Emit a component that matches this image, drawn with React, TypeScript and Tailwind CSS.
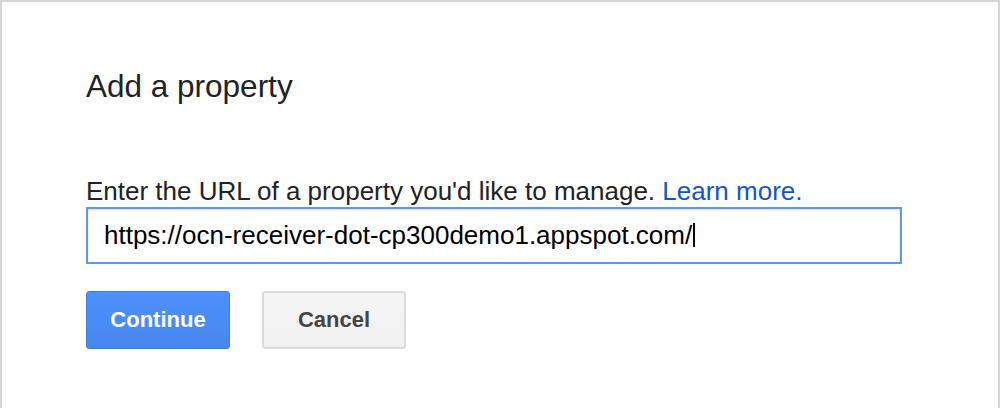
import React from "react";

export default function App() {
  return (
    <div
      className="h-[408px] w-[1000px] bg-white border-t-2 border-l-2 border-r-2 border-[#d6d6d6] pl-[84px] pt-[69px] text-[#222]"
      style={{ fontFamily: '"Liberation Sans", Arial, sans-serif' }}
    >
      <h1 className="text-[31.5px] leading-[31.5px] font-normal text-[#222]">Add a property</h1>
      <p className="mt-[75px] text-[26px] leading-[26px] text-[#222]">
        Enter the URL of a property you'd like to manage.{" "}
        <a className="text-[#1155cc]">Learn more.</a>
      </p>
      <div className="mt-[3px] flex h-[57px] w-[816px] items-center border-2 border-[#5b98f6] pl-[16px] shadow-[inset_0_1px_2px_rgba(0,0,0,0.15)]">
        <span className="text-[26px] leading-[26px] text-black">
          https://ocn-receiver-dot-cp300demo1.appspot.com/
        </span>
        <span className="ml-[1px] inline-block h-[24px] w-[2px] bg-black" />
      </div>
      <div className="mt-[27px] flex gap-[32px]">
        <button className="flex h-[58px] w-[144px] items-center justify-center rounded-[3px] border border-[#3b7fe8] bg-gradient-to-b from-[#4d90fe] to-[#4787ed] text-[22px] font-bold text-white">
          Continue
        </button>
        <button className="flex h-[58px] w-[144px] items-center justify-center rounded-[3px] border-2 border-[#dcdcdc] bg-gradient-to-b from-[#f5f5f5] to-[#f1f1f1] text-[22px] font-bold text-[#444]">
          Cancel
        </button>
      </div>
    </div>
  );
}
